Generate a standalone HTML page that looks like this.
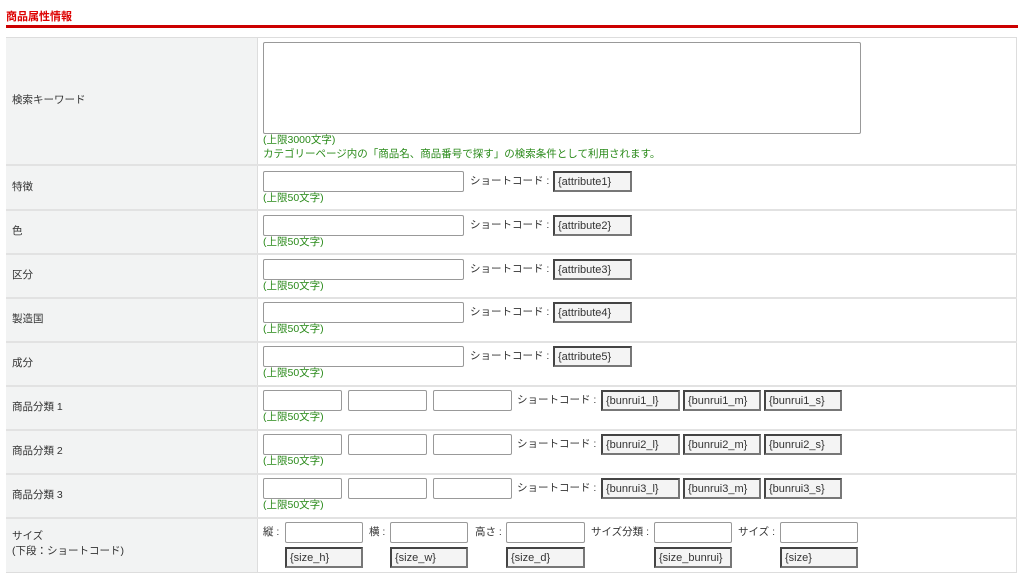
<!DOCTYPE html>
<html><head><meta charset="utf-8"><style>
*{box-sizing:border-box;margin:0;padding:0}
body{width:1024px;height:580px;background:#fff;position:relative;font-family:"Liberation Sans","Noto Sans CJK JP",sans-serif;font-size:10.5px;color:#333;overflow:hidden}
.a{position:absolute;white-space:nowrap;line-height:13px}
.t{position:absolute;left:6px;top:8px;font-weight:bold;color:#d00;font-size:11px}
.rl{position:absolute;left:6px;top:25px;width:1012px;height:3px;background:#cc0000}
.tbl{position:absolute;left:6px;top:37px;width:1011px;height:536px;border:1px solid #ddd}
.lab{position:absolute;left:6px;width:252px;background:#f2f3f3;border-right:1px solid #ddd}
.hr{position:absolute;left:6px;width:1011px;height:2px;background:#e2e2e2}
.in{position:absolute;height:21px;border:1px solid #999;border-radius:2px;background:#fff}
.cd{position:absolute;height:21px;border:2px solid #444;border-right-color:#777;border-bottom-color:#777;background:#f4f4f4;padding-left:3px;display:flex;align-items:center;color:#333;font-size:11px;white-space:nowrap}
.g{color:#2a8a1a}
</style></head><body>
<div class="t">商品属性情報</div>
<div class="rl"></div>
<div class="tbl"></div>
<div class="lab" style="top:38px;height:534px"></div>
<div class="hr" style="top:164px"></div>
<div class="hr" style="top:209px"></div>
<div class="hr" style="top:253px"></div>
<div class="hr" style="top:297px"></div>
<div class="hr" style="top:341px"></div>
<div class="hr" style="top:385px"></div>
<div class="hr" style="top:429px"></div>
<div class="hr" style="top:473px"></div>
<div class="hr" style="top:517px"></div>

<div class="a" style="left:12px;top:94px">検索キーワード</div>
<div class="in" style="left:263px;top:42px;width:598px;height:92px"></div>
<div class="a g" style="left:263px;top:134px">(上限3000文字)</div>
<div class="a g" style="left:263px;top:148px">カテゴリーページ内の「商品名、商品番号で探す」の検索条件として利用されます。</div>

<div class="a" style="left:12px;top:181px">特徴</div>
<div class="in" style="left:263px;top:171px;width:201px"></div>
<div class="a" style="left:470px;top:175px">ショートコード : </div>
<div class="cd" style="left:553px;top:171px;width:79px">{attribute1}</div>
<div class="a g" style="left:263px;top:192px">(上限50文字)</div>

<div class="a" style="left:12px;top:225px">色</div>
<div class="in" style="left:263px;top:215px;width:201px"></div>
<div class="a" style="left:470px;top:219px">ショートコード : </div>
<div class="cd" style="left:553px;top:215px;width:79px">{attribute2}</div>
<div class="a g" style="left:263px;top:236px">(上限50文字)</div>

<div class="a" style="left:12px;top:269px">区分</div>
<div class="in" style="left:263px;top:259px;width:201px"></div>
<div class="a" style="left:470px;top:263px">ショートコード : </div>
<div class="cd" style="left:553px;top:259px;width:79px">{attribute3}</div>
<div class="a g" style="left:263px;top:280px">(上限50文字)</div>

<div class="a" style="left:12px;top:313px">製造国</div>
<div class="in" style="left:263px;top:302px;width:201px"></div>
<div class="a" style="left:470px;top:306px">ショートコード : </div>
<div class="cd" style="left:553px;top:302px;width:79px">{attribute4}</div>
<div class="a g" style="left:263px;top:323px">(上限50文字)</div>

<div class="a" style="left:12px;top:357px">成分</div>
<div class="in" style="left:263px;top:346px;width:201px"></div>
<div class="a" style="left:470px;top:350px">ショートコード : </div>
<div class="cd" style="left:553px;top:346px;width:79px">{attribute5}</div>
<div class="a g" style="left:263px;top:367px">(上限50文字)</div>

<div class="a" style="left:12px;top:401px">商品分類 1</div>
<div class="in" style="left:263px;top:390px;width:79px"></div>
<div class="in" style="left:348px;top:390px;width:79px"></div>
<div class="in" style="left:433px;top:390px;width:79px"></div>
<div class="a" style="left:517px;top:394px">ショートコード : </div>
<div class="cd" style="left:601px;top:390px;width:79px">{bunrui1_l}</div>
<div class="cd" style="left:683px;top:390px;width:78px">{bunrui1_m}</div>
<div class="cd" style="left:764px;top:390px;width:78px">{bunrui1_s}</div>
<div class="a g" style="left:263px;top:411px">(上限50文字)</div>

<div class="a" style="left:12px;top:445px">商品分類 2</div>
<div class="in" style="left:263px;top:434px;width:79px"></div>
<div class="in" style="left:348px;top:434px;width:79px"></div>
<div class="in" style="left:433px;top:434px;width:79px"></div>
<div class="a" style="left:517px;top:438px">ショートコード : </div>
<div class="cd" style="left:601px;top:434px;width:79px">{bunrui2_l}</div>
<div class="cd" style="left:683px;top:434px;width:78px">{bunrui2_m}</div>
<div class="cd" style="left:764px;top:434px;width:78px">{bunrui2_s}</div>
<div class="a g" style="left:263px;top:455px">(上限50文字)</div>

<div class="a" style="left:12px;top:489px">商品分類 3</div>
<div class="in" style="left:263px;top:478px;width:79px"></div>
<div class="in" style="left:348px;top:478px;width:79px"></div>
<div class="in" style="left:433px;top:478px;width:79px"></div>
<div class="a" style="left:517px;top:482px">ショートコード : </div>
<div class="cd" style="left:601px;top:478px;width:79px">{bunrui3_l}</div>
<div class="cd" style="left:683px;top:478px;width:78px">{bunrui3_m}</div>
<div class="cd" style="left:764px;top:478px;width:78px">{bunrui3_s}</div>
<div class="a g" style="left:263px;top:499px">(上限50文字)</div>

<div class="a" style="left:12px;top:530px">サイズ</div>
<div class="a" style="left:12px;top:545px">(下段：ショートコード)</div>
<div class="a" style="left:263px;top:526px">縦 : </div>
<div class="in" style="left:285px;top:522px;width:78px"></div>
<div class="a" style="left:369px;top:526px">横 : </div>
<div class="in" style="left:390px;top:522px;width:78px"></div>
<div class="a" style="left:475px;top:526px">高さ : </div>
<div class="in" style="left:506px;top:522px;width:79px"></div>
<div class="a" style="left:591px;top:526px">サイズ分類 : </div>
<div class="in" style="left:654px;top:522px;width:78px"></div>
<div class="a" style="left:738px;top:526px">サイズ : </div>
<div class="in" style="left:780px;top:522px;width:78px"></div>
<div class="cd" style="left:285px;top:547px;width:78px">{size_h}</div>
<div class="cd" style="left:390px;top:547px;width:78px">{size_w}</div>
<div class="cd" style="left:506px;top:547px;width:79px">{size_d}</div>
<div class="cd" style="left:654px;top:547px;width:78px">{size_bunrui}</div>
<div class="cd" style="left:780px;top:547px;width:78px">{size}</div>
</body></html>
